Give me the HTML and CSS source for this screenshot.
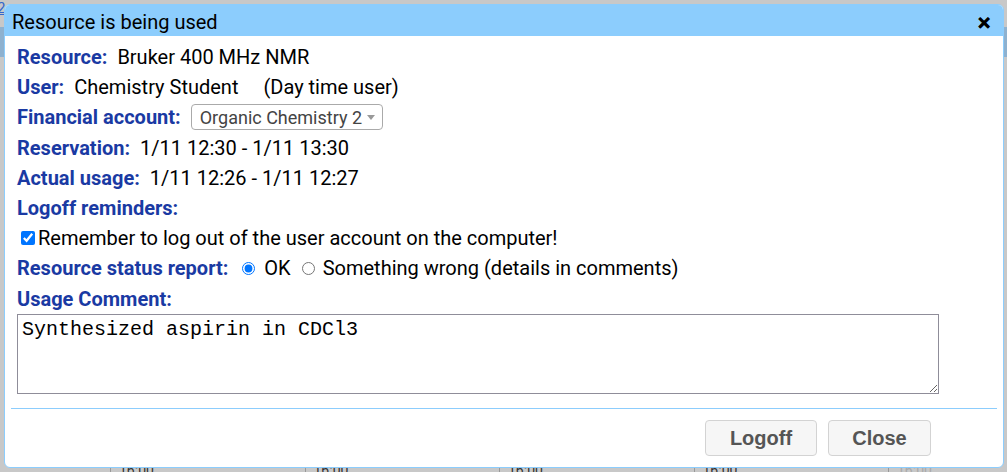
FILE: index.html
```html
<!DOCTYPE html>
<html>
<head>
<meta charset="utf-8">
<link rel="stylesheet" href="styles.css">
</head>
<body>
<div class="page">
  <a class="page-link" href="#">2</a>
  <div class="page-strip"></div>
  <div class="page-times">
    <span>16:00</span><span>16:00</span><span>16:00</span><span>16:00</span><span class="faded">16:00</span>
  </div>
</div>

<div class="dialog">
  <div class="titlebar">
    <span class="title">Resource is being used</span>
    <span class="close">&#x2715;</span>
  </div>
  <div class="content">
    <div class="row"><span class="label">Resource:</span><span class="value">Bruker 400 MHz NMR</span></div>
    <div class="row"><span class="label">User:</span><span class="value">Chemistry Student</span><span class="value extra">(Day time user)</span></div>
    <div class="row"><span class="label">Financial account:</span>
      <div class="select"><span>Organic Chemistry 2</span><span class="arrow"></span></div>
    </div>
    <div class="row"><span class="label">Reservation:</span><span class="value">1/11 12:30 - 1/11 13:30</span></div>
    <div class="row"><span class="label">Actual usage:</span><span class="value">1/11 12:26 - 1/11 12:27</span></div>
    <div class="row"><span class="label">Logoff reminders:</span></div>
    <div class="row check-row"><input type="checkbox" checked class="check"><span>Remember to log out of the user account on the computer!</span></div>
    <div class="row"><span class="label">Resource status report:</span>
      <label class="radio-opt first"><input type="radio" name="st" checked>OK</label>
      <label class="radio-opt"><input type="radio" name="st">Something wrong (details in comments)</label>
    </div>
    <div class="row"><span class="label">Usage Comment:</span></div>
    <textarea class="comment">Synthesized aspirin in CDCl3</textarea>
  </div>
  <div class="footer">
    <button class="btn logoff">Logoff</button>
    <button class="btn close-btn">Close</button>
  </div>
</div>
</body>
</html>
```

FILE: styles.css
```css
html, body {
  margin: 0;
  padding: 0;
}
body {
  width: 1007px;
  height: 472px;
  background: #c8c8c8;
  font-family: Roboto, "Liberation Sans", Arial, sans-serif;
  overflow: hidden;
  position: relative;
}
.page {
  position: relative;
  width: 1007px;
  height: 472px;
  overflow: hidden;
}
.page-link {
  position: absolute;
  left: -3px;
  top: -1px;
  color: #3366cc;
  font-size: 15px;
  text-decoration: underline;
}
.page-strip {
  position: absolute;
  left: 0;
  right: 0;
  top: 27px;
  height: 30px;
  background: #8eb1cf;
}
.page-times {
  position: absolute;
  left: 0;
  right: 0;
  bottom: -6px;
  display: flex;
  font-size: 14px;
  color: #333;
  overflow: hidden;
}
.page-times span {
  flex: 0 0 194.5px;
  padding-left: 8px;
  border-left: 1px solid #999;
  box-sizing: border-box;
}
.page-times span:first-child {
  margin-left: 110px;
}
.page-times .faded {
  color: #aaa;
  flex: 1 1 auto;
}

.dialog {
  position: absolute;
  left: 4px;
  top: 4px;
  width: 1000px;
  height: 464px;
  box-sizing: border-box;
  border: 1px solid #8ccdfd;
  border-radius: 6px;
  background: #fff;
  overflow: hidden;
  display: flex;
  flex-direction: column;
}
.titlebar {
  height: 31px;
  background: #8ccdfd;
  display: flex;
  align-items: center;
  justify-content: space-between;
  padding: 0 12px 0 7px;
  flex-shrink: 0;
}
.title {
  font-size: 20px;
  color: #000;
  padding-top: 2px;
}
.close {
  font-size: 17px;
  font-weight: bold;
  color: #000;
  padding-top: 5px;
  -webkit-text-stroke: 0.6px #000;
}
.content {
  padding: 6px 0 0 12px;
  font-size: 20px;
  color: #000;
}
.row {
  height: 30.2px;
  display: flex;
  align-items: center;
  white-space: nowrap;
}
.label {
  font-weight: bold;
  color: #1a3aa3;
  margin-right: 10px;
}
.extra {
  margin-left: 25px;
}
.select {
  box-sizing: border-box;
  height: 26px;
  width: 192px;
  border: 1px solid #aaa;
  border-radius: 4px;
  display: flex;
  align-items: center;
  justify-content: space-between;
  padding: 0 7px 0 8px;
  font-size: 18px;
  color: #444;
  margin-left: 0;
}
.arrow {
  width: 0;
  height: 0;
  border-left: 4px solid transparent;
  border-right: 4px solid transparent;
  border-top: 5px solid #999;
}
.check-row {
  padding-left: 4px;
}
.check {
  width: 14px;
  height: 14px;
  margin: 0 3px 0 0;
  accent-color: #0075ff;
}
.radio-opt {
  display: flex;
  align-items: center;
}
.radio-opt.first {
  margin-left: 4px;
  margin-right: 11px;
}
.radio-opt input {
  width: 13px;
  height: 13px;
  margin: 0 9px 0 0;
}
.radio-opt:not(.first) input {
  margin-right: 8px;
}
.comment {
  display: block;
  box-sizing: border-box;
  width: 922px;
  height: 80px;
  margin: 0;
  border: 1px solid #8f8d99;
  border-radius: 0;
  padding: 3px 4px;
  font-family: "Courier New", Courier, "Nimbus Mono PS", "Liberation Mono", monospace;
  font-size: 20px;
  line-height: 24px;
  color: #000;
  resize: both;
}
.footer {
  margin: 14px 6px 0 6px;
  border-top: 1px solid #8ccdfd;
  display: flex;
  justify-content: flex-end;
  gap: 11px;
  padding: 11px 66px 0 0;
}
.btn {
  height: 36px;
  box-sizing: border-box;
  background: #f6f6f6;
  border: 1px solid #d3d3d3;
  border-radius: 4px;
  font-family: "Liberation Sans", Arial, sans-serif;
  font-weight: bold;
  font-size: 20px;
  color: #555;
  padding: 2px 0 0 0;
}
.logoff { width: 112px; }
.close-btn { width: 103px; }
```
